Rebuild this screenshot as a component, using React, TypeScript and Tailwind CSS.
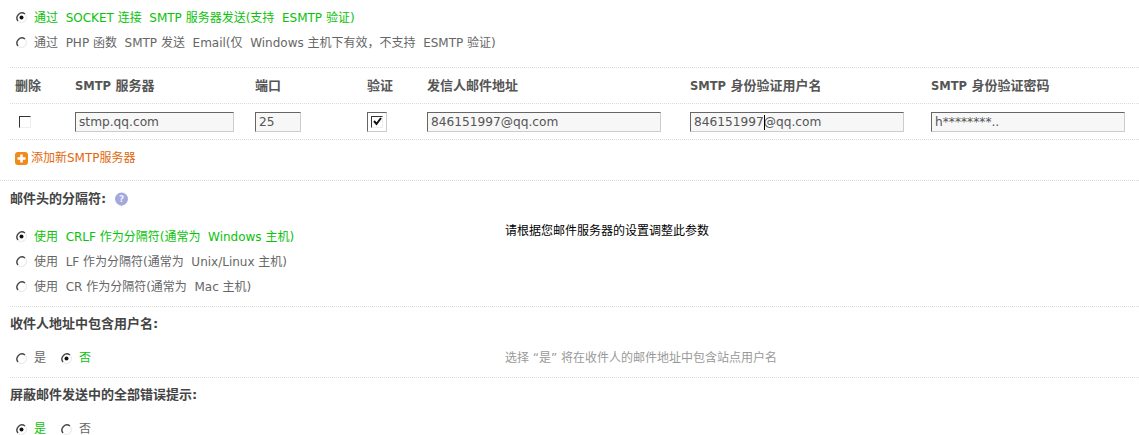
import React from 'react';

const font = 'font-["DejaVu_Sans","Noto_Sans_CJK_SC",sans-serif]';
const rule = 'border-b border-dotted border-[#dcdcdc]';

const Radio: React.FC<{ on?: boolean }> = ({ on }) => (
  <svg width="13" height="13" viewBox="0 0 13 13" className="shrink-0">
    <circle cx="6.5" cy="6.5" r="5" fill="#fff" />
    <path d="M10 3A5 5 0 0 0 3 10" fill="none" stroke="#444" strokeWidth="1.4" />
    <path d="M10.4 3.4A5 5 0 0 1 3.4 10.4" fill="none" stroke="#ececec" strokeWidth="1.2" />
    {on && <circle cx="6.5" cy="6.5" r="2" fill="#111" />}
  </svg>
);

const Option: React.FC<{ on?: boolean; label: string; className?: string }> = ({ on, label, className }) => (
  <label className={`flex items-center gap-[6px] whitespace-pre ${on ? 'text-[#0ac20a]' : 'text-[#666]'} ${className || ''}`}>
    <Radio on={on} />
    <span>{label}</span>
  </label>
);

const Check: React.FC<{ on?: boolean }> = ({ on }) => (
  <div className="w-[12px] h-[12px] border border-t-[#333] border-l-[#333] border-r-[#eee] border-b-[#eee] bg-white flex items-center justify-center">
    {on && (
      <svg width="9" height="9" viewBox="0 0 9 9">
        <path d="M1 4l2.5 3L8 1" fill="none" stroke="#111" strokeWidth="2" />
      </svg>
    )}
  </div>
);

const Field: React.FC<{ value: string; w: string; caret?: boolean }> = ({ value, w, caret }) => (
  <div className={`relative ${w}`}>
    <input
      readOnly
      value={value}
      className="block w-full h-[20px] pl-[3px] bg-[#f7f7f7] text-[#555] text-[12.2px] outline-none border border-t-[#666] border-l-[#666] border-r-[#ccc] border-b-[#ccc]"
    />
    {caret && <span className="absolute left-[74px] top-[3px] w-px h-[15px] bg-black" />}
  </div>
);

const Heading: React.FC<{ children: React.ReactNode }> = ({ children }) => (
  <div className="font-bold text-[#444] text-[13px]">{children}</div>
);

const Smtp = () => <span className="text-[11.5px]">SMTP</span>;

const App: React.FC = () => {
  return (
    <div className={`w-[1139px] h-[435px] overflow-hidden bg-white text-[12px] text-[#666] ${font}`}>
      <div className={`ml-[10px] pl-[5px] pt-[5px] h-[68px] ${rule}`}>
        <Option on label="通过  SOCKET 连接  SMTP 服务器发送(支持  ESMTP 验证)" className="h-[25px]" />
        <Option label="通过  PHP 函数  SMTP 发送  Email(仅  Windows 主机下有效，不支持  ESMTP 验证)" className="h-[25px]" />
      </div>

      <div className={`ml-[10px] h-[36px] flex items-center font-bold text-[13px] text-[#555] whitespace-nowrap ${rule}`}>
        <span className="w-[65px] pl-[5px]">删除</span>
        <span className="w-[180px]"><Smtp /> 服务器</span>
        <span className="w-[112px]">端口</span>
        <span className="w-[60px]">验证</span>
        <span className="w-[263px]">发信人邮件地址</span>
        <span className="w-[241px]"><Smtp /> 身份验证用户名</span>
        <span><Smtp /> 身份验证密码</span>
      </div>

      <div className={`ml-[10px] h-[36px] flex items-center ${rule}`}>
        <div className="w-[65px] pl-[9px]"><Check /></div>
        <Field value="stmp.qq.com" w="w-[159px] mr-[21px]" />
        <Field value="25" w="w-[46px] mr-[66px]" />
        <div className="w-[60px]">
          <div className="w-[20px] h-[20px] border border-t-[#666] border-l-[#666] border-r-[#ccc] border-b-[#ccc] bg-white flex items-center justify-center">
            <Check on />
          </div>
        </div>
        <Field value="846151997@qq.com" w="w-[234px] mr-[29px]" />
        <Field value="846151997@qq.com" w="w-[214px] mr-[27px]" caret />
        <Field value="h********.." w="w-[194px]" />
      </div>

      <div className={`h-[41px] flex items-center pl-[15px] pb-[4px] gap-[3px] text-[#e0680c] ${rule}`}>
        <svg width="13" height="13" viewBox="0 0 13 13" className="shrink-0">
          <rect x="0" y="0" width="13" height="13" rx="3" fill="#f08a1c" />
          <path d="M6.5 2.5v8M2.5 6.5h8" stroke="#fff" strokeWidth="2.6" />
        </svg>
        <span>添加新SMTP服务器</span>
      </div>

      <div className={`ml-[10px] h-[126px] ${rule}`}>
        <div className="h-[43px] pb-[7px] flex items-center gap-[8px]">
          <Heading>邮件头的分隔符:</Heading>
          <svg width="15" height="15" viewBox="0 0 15 15">
            <circle cx="7.5" cy="7" r="6.5" fill="#a3aadb" />
            <path d="M6 12l3 0-1.5 2.5z" fill="#a3aadb" />
            <text x="7.5" y="10" textAnchor="middle" fontSize="9" fontWeight="bold" fill="#eef">?</text>
          </svg>
        </div>
        <div className="flex">
          <div className="w-[495px] pl-[5px]">
            <Option on label="使用  CRLF 作为分隔符(通常为  Windows 主机)" className="h-[25px]" />
            <Option label="使用  LF 作为分隔符(通常为  Unix/Linux 主机)" className="h-[25px]" />
            <Option label="使用  CR 作为分隔符(通常为  Mac 主机)" className="h-[25px]" />
          </div>
          <div className="text-black leading-[14px]">请根据您邮件服务器的设置调整此参数</div>
        </div>
      </div>

      <div className={`ml-[10px] h-[71px] ${rule}`}>
        <div className="h-[33px] flex items-center"><Heading>收件人地址中包含用户名:</Heading></div>
        <div className="flex items-center h-[36px]">
          <div className="w-[495px] pl-[5px] flex gap-[14px]">
            <Option label="是" />
            <Option on label="否" />
          </div>
          <div className="text-[#999]">选择 “是” 将在收件人的邮件地址中包含站点用户名</div>
        </div>
      </div>

      <div className="ml-[10px]">
        <div className="h-[33px] flex items-center"><Heading>屏蔽邮件发送中的全部错误提示:</Heading></div>
        <div className="pl-[5px] h-[36px] flex items-center gap-[14px]">
          <Option on label="是" />
          <Option label="否" />
        </div>
      </div>
    </div>
  );
};

export default App;
